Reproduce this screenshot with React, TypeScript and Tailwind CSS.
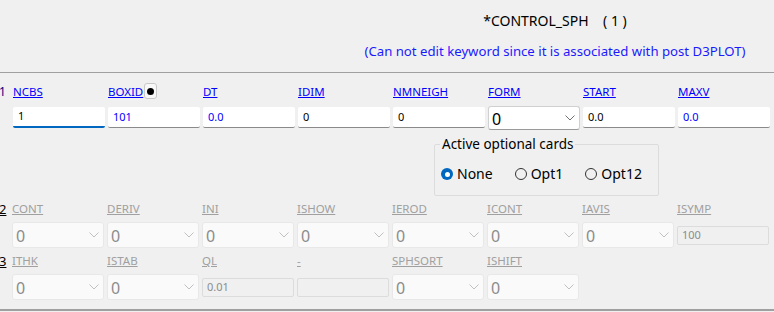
import React from 'react';

const font = "font-['Segoe_UI','Noto_Sans',sans-serif]";

function Chevron({ color }: { color: string }) {
    return (
        <svg width="10" height="6" viewBox="0 0 10 6" className="shrink-0">
            <path d="M0.5 0.5 L5 5 L9.5 0.5" fill="none" stroke={color} strokeWidth="1" />
        </svg>
    );
}

function TextInput({ value, tone = 'blue', focused = false }: { value: string; tone?: 'blue' | 'black'; focused?: boolean }) {
    return (
        <div
            className={`h-[21px] w-[92px] bg-white rounded-[2px] flex items-center pl-[5px] text-[11px] ${
                tone === 'blue' ? 'text-[#0000ff]' : 'text-black'
            } ${focused ? 'border-b-2 border-[#0067c0]' : 'border-b border-[#8a8a8a]'}`}
        >
            {value}
        </div>
    );
}

function DisabledInput({ value }: { value: string }) {
    return (
        <div className="mt-[4px] h-[19px] w-[92px] bg-[#f0f0f0] border border-[#dcdcdc] rounded-[2px] flex items-center pl-[4px] text-[11px] text-[#8c8c8c]">
            {value}
        </div>
    );
}

function Select({ value, disabled = true }: { value: string; disabled?: boolean }) {
    return (
        <div
            className={`w-[92px] flex items-center justify-between pl-[3px] pr-[4px] rounded-[3px] border text-[16px] ${
                disabled
                    ? 'h-[26px] bg-[#fafafa] border-[#e8e8e8] text-[#8c8c8c]'
                    : 'h-[24px] bg-white border-[#d0d0d0] border-b-[#9a9a9a] text-black'
            }`}
        >
            <span className="leading-none pt-[2px]">{value}</span>
            <Chevron color={disabled ? '#c0c0c0' : '#707070'} />
        </div>
    );
}

function Label({ text, enabled }: { text: string; enabled: boolean }) {
    return (
        <span className={`block text-[11.5px] leading-[16px] underline ${enabled ? 'text-[#0000ff]' : 'text-[#a0a0a0]'}`}>
            {text}
        </span>
    );
}

function Radio({ label, checked }: { label: string; checked?: boolean }) {
    return (
        <div className="flex items-center gap-[4px]">
            {checked ? (
                <span className="w-[12px] h-[12px] rounded-full bg-[#0067c0] flex items-center justify-center">
                    <span className="w-[5px] h-[5px] rounded-full bg-white" />
                </span>
            ) : (
                <span className="w-[12px] h-[12px] rounded-full border border-[#333] bg-[#f0f0f0]" />
            )}
            <span className="text-[14px] leading-[18px] text-black">{label}</span>
        </div>
    );
}

type Cell = { label: string; kind: 'select' | 'input'; value: string };

const row2: Cell[] = [
    { label: 'CONT', kind: 'select', value: '0' },
    { label: 'DERIV', kind: 'select', value: '0' },
    { label: 'INI', kind: 'select', value: '0' },
    { label: 'ISHOW', kind: 'select', value: '0' },
    { label: 'IEROD', kind: 'select', value: '0' },
    { label: 'ICONT', kind: 'select', value: '0' },
    { label: 'IAVIS', kind: 'select', value: '0' },
    { label: 'ISYMP', kind: 'input', value: '100' },
];

const row3: Cell[] = [
    { label: 'ITHK', kind: 'select', value: '0' },
    { label: 'ISTAB', kind: 'select', value: '0' },
    { label: 'QL', kind: 'input', value: '0.01' },
    { label: '-', kind: 'input', value: '' },
    { label: 'SPHSORT', kind: 'select', value: '0' },
    { label: 'ISHIFT', kind: 'select', value: '0' },
];

function DisabledRow({ num, cells }: { num: string; cells: Cell[] }) {
    return (
        <div className="flex">
            <div className="w-[13px] pt-[5px] text-[13px] leading-[16px] -ml-[1px] underline text-black">{num}</div>
            <div className="grid grid-cols-[repeat(8,92px)] gap-x-[3px]">
                {cells.map((c) => (
                    <div key={c.label} className="flex flex-col">
                        <div className="h-[26px] pt-[5px]">
                            <Label text={c.label} enabled={false} />
                        </div>
                        {c.kind === 'select' ? <Select value={c.value} /> : <DisabledInput value={c.value} />}
                    </div>
                ))}
            </div>
        </div>
    );
}

export default function App() {
    return (
        <div className={`w-[774px] h-[312px] bg-[#f0f0f0] overflow-hidden ${font}`}>
            {/* Header */}
            <div className="h-[72px] pl-[336px] text-center">
                <div className="pt-[11px] text-[14px] leading-[20px] text-black whitespace-pre">*CONTROL_SPH    ( 1 )</div>
                <div className="pt-[11px] text-[13.2px] leading-[18px] text-[#1a1aff]">
                    (Can not edit keyword since it is associated with post D3PLOT)
                </div>
            </div>
            <div className="h-px bg-[#a0a0a0]" />

            {/* Card 1 */}
            <div className="flex mt-[11px]">
                <div className="w-[13px] -ml-[1px] mr-[1px] text-[12px] leading-[16px] text-[#000080]">1</div>
                <div className="grid grid-cols-[repeat(8,92px)] gap-x-[3px]">
                    <div className="flex flex-col">
                        <div className="h-[23px]"><Label text="NCBS" enabled /></div>
                        <TextInput value="1" tone="black" focused />
                    </div>
                    <div className="flex flex-col">
                        <div className="h-[23px] flex items-start gap-[1px]">
                            <Label text="BOXID" enabled />
                            <span className="-mt-[1px] w-[13px] h-[16px] rounded-[3px] border border-[#c8c8c8] bg-[#f8f8f8] flex items-center justify-center">
                                <span className="w-[7px] h-[7px] rounded-full bg-black" />
                            </span>
                        </div>
                        <TextInput value="101" />
                    </div>
                    <div className="flex flex-col">
                        <div className="h-[23px]"><Label text="DT" enabled /></div>
                        <TextInput value="0.0" />
                    </div>
                    <div className="flex flex-col">
                        <div className="h-[23px]"><Label text="IDIM" enabled /></div>
                        <TextInput value="0" tone="black" />
                    </div>
                    <div className="flex flex-col">
                        <div className="h-[23px]"><Label text="NMNEIGH" enabled /></div>
                        <TextInput value="0" tone="black" />
                    </div>
                    <div className="flex flex-col">
                        <div className="h-[22px]"><Label text="FORM" enabled /></div>
                        <Select value="0" disabled={false} />
                    </div>
                    <div className="flex flex-col">
                        <div className="h-[23px]"><Label text="START" enabled /></div>
                        <TextInput value="0.0" tone="black" />
                    </div>
                    <div className="flex flex-col">
                        <div className="h-[23px]"><Label text="MAXV" enabled /></div>
                        <TextInput value="0.0" />
                    </div>
                </div>
            </div>

            {/* Optional cards group */}
            <fieldset className="ml-[434px] mt-[5px] w-[225px] h-[61px] border border-[#dcdcdc] rounded-[2px] px-[6px]">
                <legend className="px-[2px] -ml-[1px] text-[13.5px] leading-[18px] text-black">Active optional cards</legend>
                <div className="flex items-center pt-[12px] gap-[22px]">
                    <Radio label="None" checked />
                    <Radio label="Opt1" />
                    <Radio label="Opt12" />
                </div>
            </fieldset>

            <DisabledRow num="2" cells={row2} />
            <DisabledRow num="3" cells={row3} />

            <div className="mt-[9px] h-[2px] bg-[#a0a0a0]" />
        </div>
    );
}
